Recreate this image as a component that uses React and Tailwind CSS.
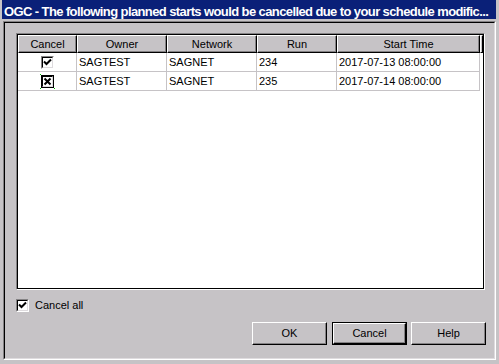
const columns = [
    { label: "Cancel", width: "w-[59px]" },
    { label: "Owner", width: "w-[90px]" },
    { label: "Network", width: "w-[90px]" },
    { label: "Run", width: "w-[80px]" },
    { label: "Start Time", width: "w-[143px]" },
];

const rows = [
    { owner: "SAGTEST", network: "SAGNET", run: "234", start: "2017-07-13 08:00:00", mark: "check", focused: false },
    { owner: "SAGTEST", network: "SAGNET", run: "235", start: "2017-07-14 08:00:00", mark: "cross", focused: true },
];

function CheckBox({ mark = "check", focused = false }) {
    return (
        <div
            className={
                focused
                    ? "relative w-[13px] h-[13px] border border-black"
                    : "relative w-[13px] h-[13px] border border-t-[#848284] border-l-[#848284] border-b-white border-r-white"
            }
        >
            <div className="w-full h-full bg-white border border-t-black border-l-black border-b-[#dedbde] border-r-[#dedbde]">
                <svg width="9" height="9" viewBox="0 0 9 9" className="block">
                    {mark === "check" ? (
                        <path d="M1 3.5 L3.5 6 L8 1.5" fill="none" stroke="black" strokeWidth="2" />
                    ) : (
                        <path d="M1.5 1.5 L7.5 7.5 M7.5 1.5 L1.5 7.5" fill="none" stroke="black" strokeWidth="2" />
                    )}
                </svg>
            </div>
            {focused && (
                <>
                    <span className="absolute -left-[2px] -top-[2px] w-[1px] h-[1px] bg-[#00c000]" />
                    <span className="absolute -left-[2px] -bottom-[2px] w-[1px] h-[1px] bg-[#00c000]" />
                    <span className="absolute -right-[2px] -bottom-[2px] w-[1px] h-[1px] bg-[#00c000]" />
                </>
            )}
        </div>
    );
}

function Button({ children, isDefault = false, className = "" }) {
    return (
        <div
            className={
                (isDefault
                    ? "border border-black "
                    : "") + "w-[75px] h-[23px] " + className
            }
        >
            <div className="w-full h-full flex items-center justify-center border border-t-white border-l-white border-r-black border-b-black shadow-[inset_-1px_-1px_0_#848284] text-[11px] text-black">
                {children}
            </div>
        </div>
    );
}

export default function App() {
    return (
        <div className="w-[499px] h-[364px] bg-[#c6c3c6] flex flex-col font-['Liberation_Sans',Arial,sans-serif] text-black overflow-hidden">
            <div className="h-[19px] ml-[2px] mr-[3px] bg-[#0a2078] text-white font-bold text-[13px] leading-[13px] tracking-[-0.6px] pt-[5px] pl-[2px] whitespace-nowrap">
                OGC - The following planned starts would be cancelled due to your schedule modific...
            </div>

            <div className="mt-[2px] ml-[3px] mr-[3px] h-[339px] border border-t-[#848284] border-l-[#848284] border-b-white border-r-white">
                <div className="w-full h-full border border-t-black border-l-black border-b-[#dedbde] border-r-[#dedbde] flex flex-col pt-[10px] pl-[11px] pr-[8px]">
                    <div className="w-[469px] h-[257px] border border-t-[#848284] border-l-[#848284] border-b-white border-r-white">
                        <div className="w-full h-full border border-black bg-white flex flex-col">
                            <div className="h-[18px] flex bg-[#c6c3c6]">
                                {columns.map((col) => (
                                    <div
                                        key={col.label}
                                        className={`${col.width} h-full flex items-center justify-center border border-t-white border-l-white border-r-black border-b-black shadow-[inset_-1px_-1px_0_#848284] text-[11px]`}
                                    >
                                        {col.label}
                                    </div>
                                ))}
                                <div className="flex-1 h-full border border-t-white border-l-white border-r-black border-b-black" />
                            </div>

                            {rows.map((row) => (
                                <div className="h-[19px] flex text-[11px]" key={row.run}>
                                    <div className="w-[59px] h-full flex items-center justify-center border-r border-b border-[#c6c3c6]">
                                        <CheckBox mark={row.mark} focused={row.focused} />
                                    </div>
                                    <div className="w-[90px] h-full flex items-center px-[2px] border-r border-b border-[#c6c3c6]">{row.owner}</div>
                                    <div className="w-[90px] h-full flex items-center px-[2px] border-r border-b border-[#c6c3c6]">{row.network}</div>
                                    <div className="w-[80px] h-full flex items-center px-[2px] border-r border-b border-[#c6c3c6]">{row.run}</div>
                                    <div className="w-[143px] h-full flex items-center px-[2px] border-r border-b border-[#c6c3c6]">{row.start}</div>
                                </div>
                            ))}
                        </div>
                    </div>

                    <div className="mt-[9px] h-[13px] flex items-center">
                        <CheckBox mark="check" />
                        <span className="ml-[6px] text-[11px]">Cancel all</span>
                    </div>

                    <div className="mt-[10px] flex justify-end">
                        <Button>OK</Button>
                        <Button isDefault className="ml-[5px]">Cancel</Button>
                        <Button className="ml-[4px]">Help</Button>
                    </div>
                </div>
            </div>
        </div>
    );
}
